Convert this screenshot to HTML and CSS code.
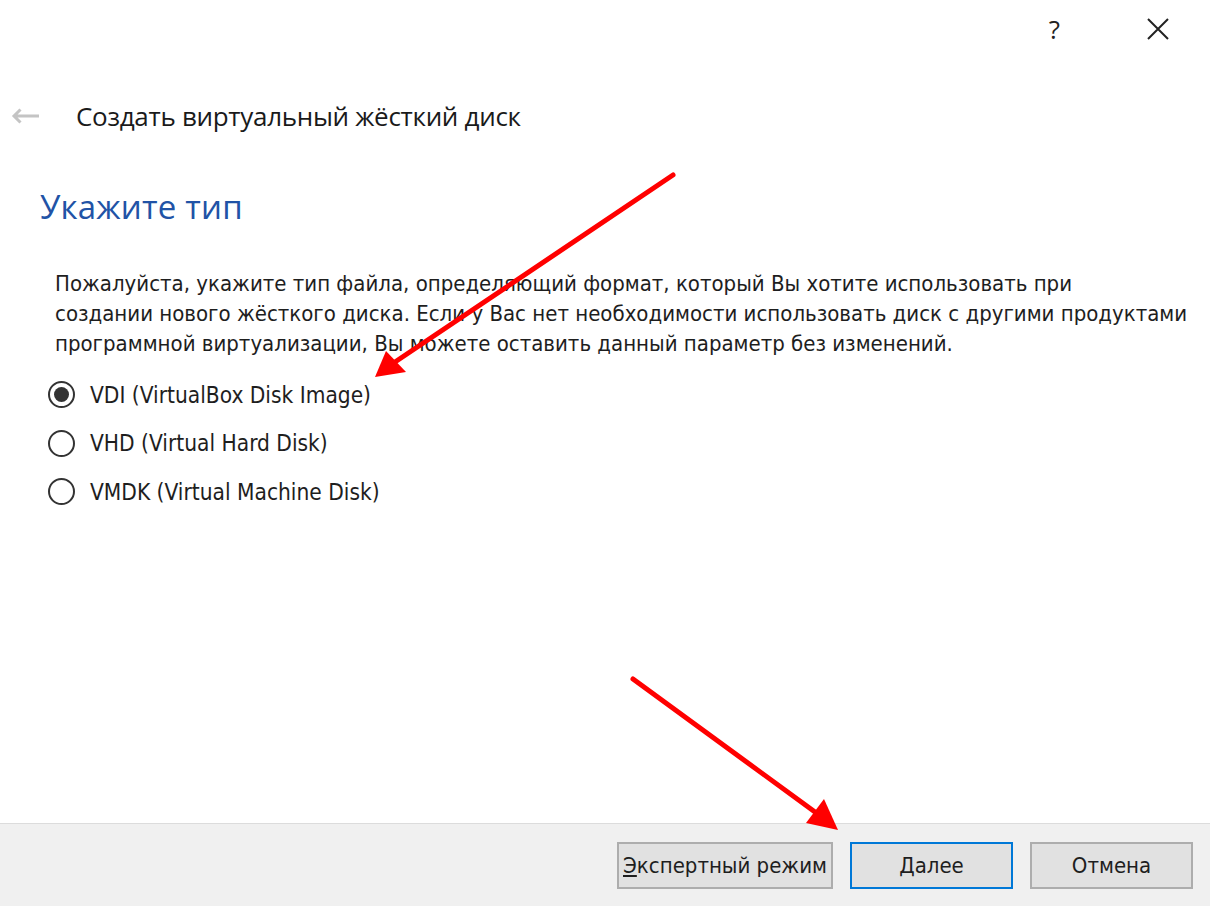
FILE: index.html
```html
<!DOCTYPE html>
<html lang="ru">
<head>
    <meta charset="UTF-8">
    <title>Создать виртуальный жёсткий диск</title>
    <link rel="stylesheet" href="styles.css">
</head>
<body>
    <div class="dialog">
        <div class="titlebar">
            <span class="help">?</span>
            <span class="close">
                <svg width="24" height="24" viewBox="0 0 24 24"><path d="M2 2 L22 22 M22 2 L2 22" stroke="#222" stroke-width="2" fill="none"/></svg>
            </span>
        </div>

        <div class="header">
            <svg class="back" width="30" height="18" viewBox="0 0 30 18"><path d="M29 9 H4 M10.5 2.5 L4 9 L10.5 15.5" stroke="#c4c4c4" stroke-width="3" fill="none"/></svg>
            <span class="wizard-title">Создать виртуальный жёсткий диск</span>
        </div>

        <div class="content">
            <h2>Укажите тип</h2>
            <p class="info">Пожалуйста, укажите тип файла, определяющий формат, который Вы хотите использовать при<br>
                создании нового жёсткого диска. Если у Вас нет необходимости использовать диск с другими продуктами<br>
                программной виртуализации, Вы можете оставить данный параметр без изменений.</p>

            <div class="options">
                <label class="option"><span class="radio checked"></span>VDI (VirtualBox Disk Image)</label>
                <label class="option"><span class="radio"></span>VHD (Virtual Hard Disk)</label>
                <label class="option"><span class="radio"></span>VMDK (Virtual Machine Disk)</label>
            </div>
        </div>

        <div class="footer">
            <button class="btn"><u>Э</u>кспертный режим</button>
            <button class="btn default"><u>Д</u>алее</button>
            <button class="btn">Отмена</button>
        </div>

        <!-- red annotation arrows -->
        <svg class="arrows" width="1210" height="906" viewBox="0 0 1210 906">
            <line x1="673" y1="175" x2="395" y2="362" stroke="#f00" stroke-width="5" stroke-linecap="round"/>
            <polygon points="375,377 386,351 406,372" fill="#f00"/>
            <line x1="633" y1="679" x2="815" y2="812" stroke="#f00" stroke-width="5" stroke-linecap="round"/>
            <polygon points="838,830 806,823 824,799" fill="#f00"/>
        </svg>
    </div>
</body>
</html>
```

FILE: styles.css
```css
body {
    margin: 0;
    background: #fff;
    font-family: "DejaVu Sans Condensed", "DejaVu Sans", sans-serif;
    color: #1e1e1e;
}
.dialog {
    position: relative;
    width: 1210px;
    height: 906px;
    display: flex;
    flex-direction: column;
    overflow: hidden;
}
.titlebar {
    height: 58px;
    display: flex;
    justify-content: flex-end;
    align-items: center;
    padding-right: 40px;
    gap: 86px;
}
.help {
    font-family: "Open Sans", sans-serif;
    font-size: 26px;
    color: #222;
}
.close {
    display: flex;
}
.header {
    height: 116px;
    display: flex;
    align-items: center;
    padding-left: 10px;
}
.back {
    margin-right: 36px;
}
.wizard-title {
    font-family: "Open Sans", sans-serif;
    font-size: 26px;
    letter-spacing: -0.3px;
    color: #1a1a1a;
}
.content {
    flex: 1;
    padding-left: 40px;
}
h2 {
    margin: 11px 0 0;
    font-family: "Open Sans", sans-serif;
    font-weight: normal;
    font-size: 33px;
    letter-spacing: 0.2px;
    line-height: 44px;
    color: #2153a6;
}
.info {
    margin: 40px 0 0 15px;
    font-size: 22px;
    line-height: 30px;
    white-space: nowrap;
}
.options {
    margin-top: 22px;
    display: flex;
    flex-direction: column;
    gap: 21.5px;
}
.option {
    display: flex;
    align-items: center;
    font-size: 22.5px;
    height: 27px;
}
.radio {
    box-sizing: border-box;
    width: 27px;
    height: 27px;
    border: 2px solid #333;
    border-radius: 50%;
    margin: 0 15px 0 8px;
    display: flex;
    align-items: center;
    justify-content: center;
}
.radio.checked::after {
    content: "";
    width: 15px;
    height: 15px;
    border-radius: 50%;
    background: #333;
}
.footer {
    height: 82px;
    background: #f0f0f0;
    border-top: 1px solid #dcdcdc;
    display: flex;
    justify-content: flex-end;
    align-items: center;
    padding-right: 17px;
    gap: 17px;
}
.btn {
    height: 47px;
    min-width: 163px;
    padding: 0 4px;
    background: #e1e1e1;
    border: 2px solid #adadad;
    font-family: "DejaVu Sans Condensed", "DejaVu Sans", sans-serif;
    font-size: 22px;
    color: #1e1e1e;
}
.btn.default {
    border-color: #0078d7;
}
.arrows {
    position: absolute;
    left: 0;
    top: 0;
    pointer-events: none;
}
```
